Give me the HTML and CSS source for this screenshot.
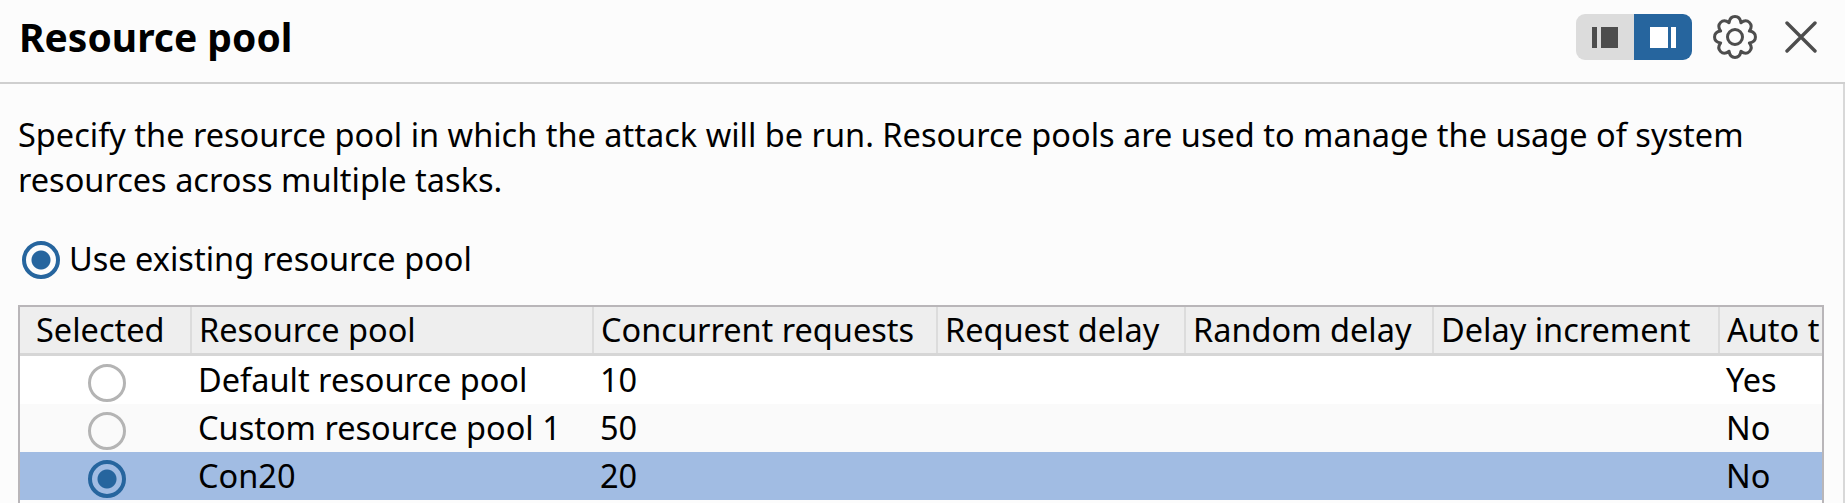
FILE: index.html
```html
<!DOCTYPE html>
<html lang="en">
<head>
    <meta charset="UTF-8">
    <meta name="viewport" content="width=device-width, initial-scale=1.0">
    <title>Resource pool</title>
    <link rel="stylesheet" href="styles.css">
</head>
<body>

<header class="panel-header">
    <h1>Resource pool</h1>
    <div class="header-tools">
        <div class="layout-toggle">
            <button class="toggle-btn" aria-label="Dock left">
                <svg width="26" height="21" viewBox="0 0 26 21"><rect x="0" y="0" width="5" height="21" fill="#4d4d4d"/><rect x="9" y="0" width="17" height="21" fill="#4d4d4d"/></svg>
            </button>
            <button class="toggle-btn active" aria-label="Dock right">
                <svg width="26" height="21" viewBox="0 0 26 21"><rect x="0" y="0" width="18" height="21" fill="#fff"/><rect x="21" y="0" width="5" height="21" fill="#fff"/></svg>
            </button>
        </div>
        <button class="icon-btn" aria-label="Settings">
            <svg width="44" height="44" viewBox="0 0 44 44" fill="none" stroke="#4d4d4d" stroke-width="3" stroke-linejoin="round">
                <circle cx="22" cy="22" r="7.5"/>
                <path d="M16.07 7.68C17.22 -.5 26.78 -.5 27.93 7.68C34.53 2.71 41.29 9.47 36.32 16.07C44.5 17.22 44.5 26.78 36.32 27.93C41.29 34.53 34.53 41.29 27.93 36.32C26.78 44.5 17.22 44.5 16.07 36.32C9.47 41.29 2.71 34.53 7.68 27.93C-.5 26.78 -.5 17.22 7.68 16.07C2.71 9.47 9.47 2.71 16.07 7.68Z"/>
            </svg>
        </button>
        <button class="icon-btn" aria-label="Close">
            <svg width="32" height="32" viewBox="0 0 32 32" fill="none" stroke="#4d4d4d" stroke-width="3.4" stroke-linecap="round"><path d="M2 2l28 28M30 2L2 30"/></svg>
        </button>
    </div>
</header>

<main class="panel-body">
    <p class="intro">Specify the resource pool in which the attack will be run. Resource pools are used to manage the usage of system resources across multiple tasks.</p>

    <label class="option">
        <span class="radio checked"></span>
        Use existing resource pool
    </label>

    <div class="table-wrap">
        <table>
            <colgroup>
                <col class="col-selected">
                <col class="col-name">
                <col class="col-concurrent">
                <col class="col-delay">
                <col class="col-random">
                <col class="col-increment">
                <col class="col-auto">
            </colgroup>
            <thead>
                <tr>
                    <th class="head-selected">Selected</th>
                    <th>Resource pool</th>
                    <th>Concurrent requests</th>
                    <th>Request delay</th>
                    <th>Random delay</th>
                    <th>Delay increment</th>
                    <th>Auto t</th>
                </tr>
            </thead>
            <tbody>
                <tr>
                    <td class="cell-radio"><span class="radio"></span></td>
                    <td>Default resource pool</td>
                    <td>10</td>
                    <td></td>
                    <td></td>
                    <td></td>
                    <td>Yes</td>
                </tr>
                <tr class="alt">
                    <td class="cell-radio"><span class="radio"></span></td>
                    <td>Custom resource pool 1</td>
                    <td>50</td>
                    <td></td>
                    <td></td>
                    <td></td>
                    <td>No</td>
                </tr>
                <tr class="selected">
                    <td class="cell-radio"><span class="radio checked"></span></td>
                    <td>Con20</td>
                    <td>20</td>
                    <td></td>
                    <td></td>
                    <td></td>
                    <td>No</td>
                </tr>
            </tbody>
        </table>
    </div>
</main>

</body>
</html>
```

FILE: styles.css
```css
html, body {
    height: 100%;
}
body {
    display: flex;
    flex-direction: column;
    font-family: "Noto Sans", "Open Sans", sans-serif;
    margin: 0;
    background-color: #fcfcfc;
    color: #000;
    font-size: 32.5px;
    overflow: hidden;
}
.panel-header {
    display: flex;
    align-items: center;
    justify-content: space-between;
    box-sizing: border-box;
    height: 84px;
    flex-shrink: 0;
    padding: 0 28px 8px 19px;
    border-bottom: 2px solid #cfcfcf;
}
h1 {
    margin: 0;
    font-size: 39px;
    font-weight: 700;
    line-height: 50px;
}
.header-tools {
    display: flex;
    align-items: center;
}
.layout-toggle {
    display: flex;
    height: 46px;
    border-radius: 9px;
    overflow: hidden;
    margin-right: 21px;
}
.toggle-btn {
    display: flex;
    align-items: center;
    justify-content: center;
    width: 58px;
    padding: 0;
    border: none;
    background-color: #dcdcdc;
}
.toggle-btn.active {
    background-color: #26659e;
}
.icon-btn {
    display: flex;
    padding: 0;
    border: none;
    background: none;
}
.icon-btn + .icon-btn {
    margin-left: 28px;
}
.panel-body {
    flex: 1;
    display: flex;
    flex-direction: column;
    min-height: 0;
    padding: 28px 19px 0 18px;
    border-right: 2px solid #d8d8d8;
}
.intro {
    margin: 0 0 36px 0;
    line-height: 45px;
    max-width: 1760px;
}
.option {
    display: flex;
    align-items: center;
    gap: 9px;
    height: 40px;
    margin: 0 0 27px 4px;
}
.option .radio {
    margin-top: 3px;
}
.radio {
    display: inline-block;
    box-sizing: border-box;
    width: 38px;
    height: 38px;
    border: 3px solid #b4b4b4;
    border-radius: 50%;
    vertical-align: middle;
}
.radio.checked {
    border: 4px solid #26659e;
    background: radial-gradient(circle, #26659e 0 9px, transparent 10px);
}
.table-wrap {
    flex: 1;
    min-height: 0;
    border: 2px solid #b9b6b9;
    border-bottom: none;
    overflow: hidden;
}
table {
    width: 100%;
    table-layout: fixed;
    border-collapse: collapse;
}
.col-selected { width: 171px; }
.col-name { width: 402px; }
.col-concurrent { width: 344px; }
.col-delay { width: 248px; }
.col-random { width: 248px; }
.col-increment { width: 286px; }
th, td {
    padding: 0 7px;
    text-align: left;
    font-weight: 400;
    white-space: nowrap;
    overflow: hidden;
    line-height: 44px;
}
th {
    height: 46px;
    background-color: #eeeeee;
    border-right: 2px solid #dcdcdc;
    border-bottom: 3px solid #d6d6d6;
}
th:last-child {
    border-right: none;
}
th.head-selected {
    padding-left: 16px;
}
td {
    height: 48px;
    background-color: #fff;
}
tr.alt td {
    background-color: #fafafa;
}
tr.selected td {
    background-color: #a1bce3;
}
td.cell-radio {
    text-align: center;
    padding: 0 0 0 3px;
}
```
